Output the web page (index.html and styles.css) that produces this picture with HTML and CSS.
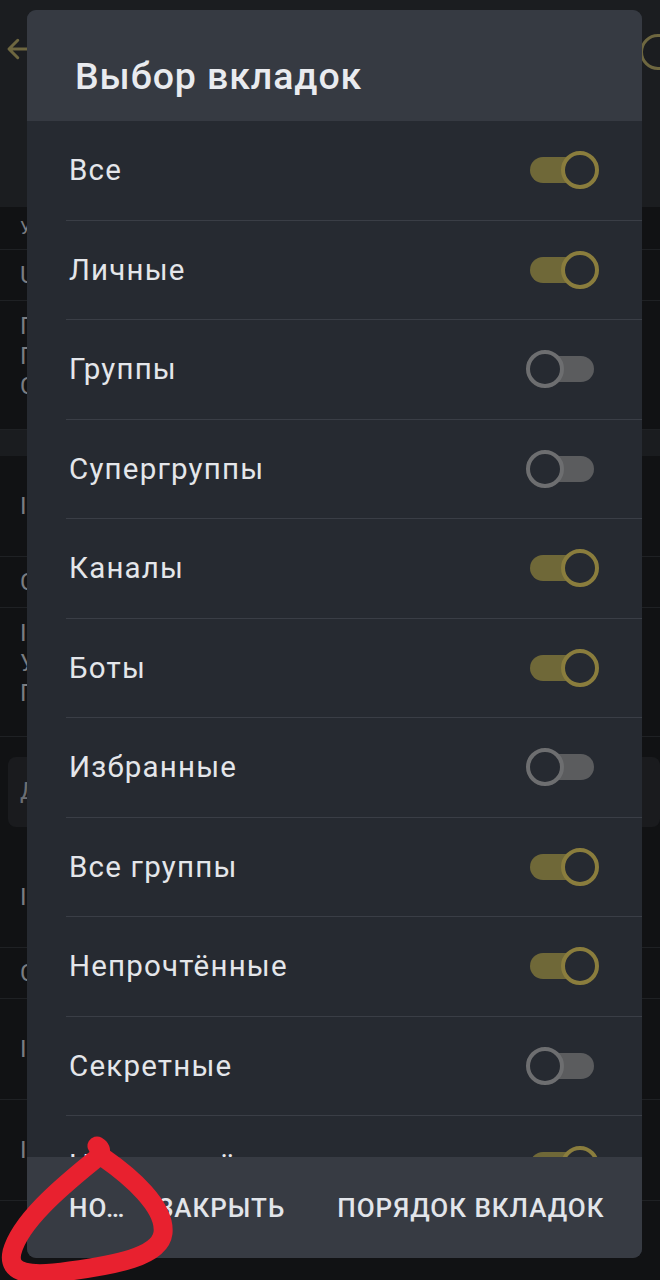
FILE: index.html
```html
<!DOCTYPE html>
<html lang="ru">

<head>
    <meta charset="UTF-8">
    <meta name="viewport" content="width=device-width, initial-scale=1.0">
    <title>Выбор вкладок</title>
    <link rel="stylesheet" href="styles.css">
</head>

<body>
    <!-- page behind the dialog, only its left edge peeks out -->
    <div class="page">
        <div class="toolbar">
            <svg class="back" width="30" height="30" viewBox="0 0 24 24">
                <path d="M20 12H5M11 5l-7 7 7 7" fill="none" stroke="#6e6740" stroke-width="2.4" stroke-linecap="round" stroke-linejoin="round"/>
            </svg>
            <span class="round-icon"></span>
        </div>
        <div class="page-row small">У</div>
        <div class="page-row">U</div>
        <div class="page-row text">П<br>Г<br>С</div>
        <div class="page-band"></div>
        <div class="page-row big">I</div>
        <div class="page-row">С</div>
        <div class="page-row text">I<br>У<br>Г</div>
        <div class="page-card">Д</div>
        <div class="page-row big">I</div>
        <div class="page-row">С</div>
        <div class="page-row big">I</div>
        <div class="page-row big">I</div>
    </div>

    <div class="dialog">
        <div class="dialog-head">
            <h1>Выбор вкладок</h1>
        </div>
        <div class="tab-list">
            <div class="tab-row"><span>Все</span><span class="switch on"><i></i></span></div>
            <div class="tab-row"><span>Личные</span><span class="switch on"><i></i></span></div>
            <div class="tab-row"><span>Группы</span><span class="switch"><i></i></span></div>
            <div class="tab-row"><span>Супергруппы</span><span class="switch"><i></i></span></div>
            <div class="tab-row"><span>Каналы</span><span class="switch on"><i></i></span></div>
            <div class="tab-row"><span>Боты</span><span class="switch on"><i></i></span></div>
            <div class="tab-row"><span>Избранные</span><span class="switch"><i></i></span></div>
            <div class="tab-row"><span>Все группы</span><span class="switch on"><i></i></span></div>
            <div class="tab-row"><span>Непрочтённые</span><span class="switch on"><i></i></span></div>
            <div class="tab-row"><span>Секретные</span><span class="switch"><i></i></span></div>
            <div class="tab-row"><span>Неотключённые</span><span class="switch on"><i></i></span></div>
        </div>
        <div class="dialog-foot">
            <button class="btn">Но…</button>
            <button class="btn">Закрыть</button>
            <button class="btn wide">Порядок вкладок</button>
        </div>
    </div>

    <svg class="scribble" width="660" height="1280" viewBox="0 0 660 1280">
        <path d="M97 1146 C104 1150 100 1156 92 1162 C60 1188 20 1222 12 1252 C7 1274 30 1277 70 1271 C114 1265 160 1257 163 1233 C166 1207 130 1176 104 1158"
            fill="none" stroke="#e8212f" stroke-width="19" stroke-linecap="round" stroke-linejoin="round"/>
    </svg>
</body>
</html>
```

FILE: styles.css
```css
* {
    margin: 0;
    padding: 0;
    box-sizing: border-box;
}

body {
    width: 660px;
    height: 1280px;
    overflow: hidden;
    background: #111214;
    font-family: Roboto, "Noto Sans", sans-serif;
    position: relative;
}

/* background page */
.page {
    display: flex;
    flex-direction: column;
}

.toolbar {
    height: 207px;
    background: #1b1d20;
    display: flex;
    justify-content: space-between;
    padding: 34px 0 0 4px;
}

.round-icon {
    width: 36px;
    height: 36px;
    border: 3px solid #6e6740;
    border-radius: 50%;
    margin-right: -16px;
}

.page-row {
    color: #7a7d82;
    font-size: 24px;
    padding: 10px 20px;
    border-bottom: 1px solid #1f2124;
    line-height: 30px;
}

.page-row.small {
    font-size: 18px;
    padding: 6px 20px;
}

.page-row.text {
    line-height: 30px;
    padding-bottom: 28px;
}

.page-row.big {
    padding: 35px 20px;
}

.page-band {
    height: 26px;
    background: #1a1c1f;
}

.page-card {
    margin: 20px 0 20px 8px;
    height: 70px;
    background: #1a1b1e;
    border-radius: 8px;
    color: #6c6f74;
    font-size: 24px;
    padding: 20px 12px;
}

/* dialog */
.dialog {
    position: absolute;
    top: 10px;
    left: 27px;
    width: 615px;
    height: 1248px;
    border-radius: 9px;
    overflow: hidden;
    display: flex;
    flex-direction: column;
    background: #262a31;
}

.dialog-head {
    height: 111px;
    flex-shrink: 0;
    background: #363a42;
    padding: 46px 0 0 48px;
}

.dialog-head h1 {
    font-size: 37.5px;
    font-weight: 500;
    letter-spacing: 0.9px;
    line-height: 40px;
    color: #e9ebef;
}

.tab-list {
    flex: 1;
    overflow: hidden;
}

.tab-row {
    height: 99.5px;
    margin-left: 39px;
    padding: 0 43px 0 3px;
    border-bottom: 1.5px solid #3a3e46;
    display: flex;
    align-items: center;
    justify-content: space-between;
    font-size: 29.5px;
    letter-spacing: 1.2px;
    color: #e4e6ea;
}

.switch {
    position: relative;
    width: 73px;
    height: 38px;
}

.switch::before {
    content: "";
    position: absolute;
    left: 4px;
    right: 5px;
    top: 6px;
    height: 26px;
    border-radius: 13px;
    background: #5b5c5e;
}

.switch i {
    position: absolute;
    left: 0;
    top: 0;
    width: 38px;
    height: 38px;
    border-radius: 50%;
    border: 4px solid #6d6e70;
    background: #262a31;
}

.switch.on::before {
    background: #6f6838;
}

.switch.on i {
    left: 35px;
    border-color: #8a7d3d;
}

.dialog-foot {
    height: 101px;
    flex-shrink: 0;
    background: #373b43;
    display: flex;
    align-items: center;
    padding: 0 0 0 42px;
}

.btn {
    border: 0;
    background: none;
    font-family: Roboto, "Noto Sans", sans-serif;
    font-size: 26px;
    font-weight: 500;
    letter-spacing: 1px;
    text-transform: uppercase;
    color: #e2e5ea;
    margin-right: 32px;
}

.btn.wide {
    margin-left: 20px;
}

.scribble {
    position: absolute;
    left: 0;
    top: 0;
    pointer-events: none;
}
```
